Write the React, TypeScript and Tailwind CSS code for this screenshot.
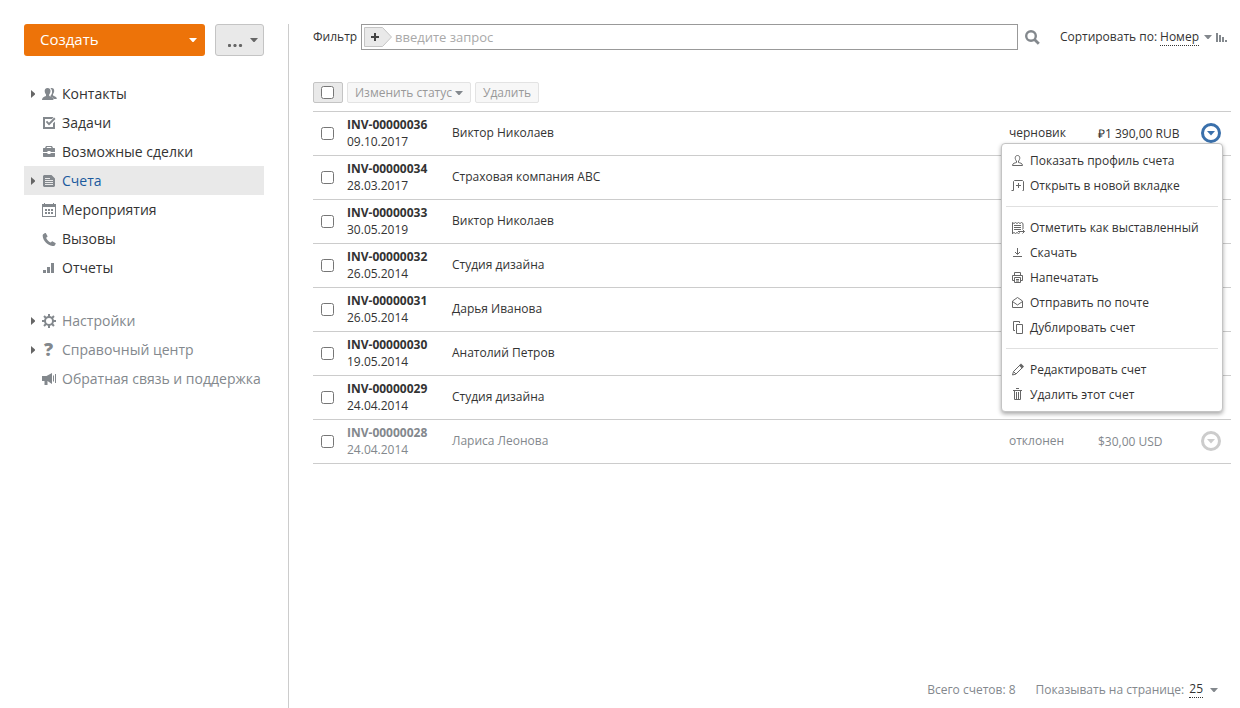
import type { ReactNode } from "react"
import { clsx } from "clsx"

function Caret({ className }: { className?: string }) {
  return (
    <svg className={clsx("h-1 w-2 shrink-0", className)} viewBox="0 0 8 4" fill="currentColor" aria-hidden="true">
      <path d="M0 0h8L4.500 4h-1z" />
    </svg>
  )
}

function NavIcon({ children }: { children: ReactNode }) {
  return (
    <svg className="h-[15px] w-4 shrink-0 text-[#83888d]" viewBox="0 0 16 15" fill="currentColor" aria-hidden="true">
      {children}
    </svg>
  )
}

function MenuIcon({ children }: { children: ReactNode }) {
  return (
    <svg
      className="h-[14px] w-[14px] shrink-0 text-[#666]"
      viewBox="0 0 14 14"
      fill="none"
      stroke="currentColor"
      aria-hidden="true"
    >
      {children}
    </svg>
  )
}

const gearTeeth = [0, 45, 90, 135, 180, 225, 270, 315]

const mainNav = [
  {
    title: "Контакты",
    expandable: true,
    icon: (
      <NavIcon>
        <path d="M8.300 2.200C8.800 2 9.300 2 9.700 2c1.700 0 2.600 1.200 2.500 3-.1 1.400-.6 2.500-1.200 3.200v1.200c1.500.9 3.800 1.100 3.800 3.600h-3.300c-.3-1.400-1.700-1.900-3-2.500V9.800c1.200-1.300 1.700-3 1.500-4.900-.1-1.100-.6-2-1.700-2.700z" />
        <path d="M5.600 2C3.500 2 2.500 3.400 2.700 5.200c.1 1.400.6 2.500 1.300 3.200v1.500C2.300 10.700 0 11.300 0 14h11.500c0-2.700-2.300-3.300-4.300-4.100V8.400C7.900 7.700 8.400 6.600 8.500 5.200 8.700 3.400 7.700 2 5.600 2z" />
      </NavIcon>
    ),
  },
  {
    title: "Задачи",
    icon: (
      <NavIcon>
        <path d="M1 2h10.500L10 4H3v8h8V8.500l2-2V14H1z" />
        <path d="M3.800 7l1.300-1.200L7 7.700l5.200-5.200L13.500 4 7 10.400z" />
      </NavIcon>
    ),
  },
  {
    title: "Возможные сделки",
    icon: (
      <NavIcon>
        <path d="M4 2h6l1 2h1.500l.5.500V8H8.500V7h-3v1H1V4.500L1.500 4H3zm1 1-.5 1h5L9 3z" />
        <path d="M1 9h4.500v1h3V9H13v3.500l-.5.500h-11l-.5-.500z" />
      </NavIcon>
    ),
  },
  {
    title: "Счета",
    expandable: true,
    active: true,
    icon: (
      <NavIcon>
        <path fillRule="evenodd" d="M2 2h7.500L13 5.500V13l-1 1H2l-1-1V3zM3 5v1h5V5zm0 2v1h8V7zm0 2v1h8V9zm0 2v1h8v-1z" />
      </NavIcon>
    ),
  },
  {
    title: "Мероприятия",
    icon: (
      <NavIcon>
        <path fillRule="evenodd" d="M0 2h2V1h1v1h8V1h1v1h2v13H0zM1 5v9h12V5z" />
        <path d="M3 7h2v2H3zM6 7h2v2H6zM9 7h2v2H9zM3 10h2v2H3zM6 10h2v2H6zM9 10h2v2H9z" />
      </NavIcon>
    ),
  },
  {
    title: "Вызовы",
    icon: (
      <NavIcon>
        <path d="M1.200 3.200 3 2.100c.4-.2.7-.1.900.2l1.500 2.800c.2.300.1.700-.2.900l-1.100.8c.8 2.100 2.400 3.900 4.700 4.700l1-.9c.3-.3.600-.3.900-.1l2.700 1.600c.3.200.4.500.2.900l-.9 1.400c-.4.500-1.300.7-2.300.6C5.500 14.400 1 9.700.7 5c-.1-.8.1-1.400.5-1.800z" />
      </NavIcon>
    ),
  },
  {
    title: "Отчеты",
    icon: (
      <NavIcon>
        <path d="M1 10h3v3H1zM5 7h3v6H5zM9 3h3v10H9z" />
      </NavIcon>
    ),
  },
]

const extraNav = [
  {
    title: "Настройки",
    expandable: true,
    icon: (
      <NavIcon>
        <circle cx="7" cy="8" r="4" fill="none" stroke="currentColor" strokeWidth="2" />
        {gearTeeth.map((angle) => (
          <path key={angle} d="M6 1h2v3H6z" transform={`rotate(${angle} 7 8)`} />
        ))}
      </NavIcon>
    ),
  },
  {
    title: "Справочный центр",
    expandable: true,
    icon: <span className="w-4 pl-[2px] text-[18px] leading-[15px] font-extrabold text-[#83888d]">?</span>,
  },
  {
    title: "Обратная связь и поддержка",
    icon: (
      <NavIcon>
        <path d="M0 5h4.500L10 2v11L5.500 10v4h-3v-4H0z" />
        <path d="M11.500 4.500v6M13.500 3v9" fill="none" stroke="currentColor" />
      </NavIcon>
    ),
  },
]

const menuGroups = [
  [
    {
      title: "Показать профиль счета",
      icon: (
        <MenuIcon>
          <path d="M5.500 8.500V7C3.800 5.500 3.500 1.500 6.500 1.500S9.200 5.500 7.500 7v1.500c1.500.5 4 .5 4 3h-10c0-2.500 2.500-2.500 4-3z" />
        </MenuIcon>
      ),
    },
    {
      title: "Открыть в новой вкладке",
      icon: (
        <MenuIcon>
          <path d="M.5 11.500h2v-9l1-1h8l1 1v9h-1M7.500 4v5M5 6.500h5" />
        </MenuIcon>
      ),
    },
  ],
  [
    {
      title: "Отметить как выставленный",
      icon: (
        <MenuIcon>
          <path d="M1.500 13V1.500l1.500 1 1.500-1 1.500 1 1.500-1 1.500 1 1.500-1 1.500 1V8M1.500 12.500l1.500-1 1.500 1 1.500-1 1.500 1 1.500-1M3 4.500h7M3 6.500h7M3 8.500h7M7 10.500h6.500M11.500 8.500l2 2-2 2" />
        </MenuIcon>
      ),
    },
    {
      title: "Скачать",
      icon: (
        <MenuIcon>
          <path d="M6.500 2v6M4 6l2.500 2.500L9 6M2 10.500h9" />
        </MenuIcon>
      ),
    },
    {
      title: "Напечатать",
      icon: (
        <MenuIcon>
          <path d="M3.500 4V1.500h6V4M3.500 9.500h-2v-5h10v5h-2M3.500 6.500h6v5h-6zM5 8.500h3M5 10h3" />
        </MenuIcon>
      ),
    },
    {
      title: "Отправить по почте",
      icon: (
        <MenuIcon>
          <path d="m1.500 5 5-3.500 5 3.500v6.500h-10zM1.500 5.500l5 3.500 5-3.500" />
        </MenuIcon>
      ),
    },
    {
      title: "Дублировать счет",
      icon: (
        <MenuIcon>
          <path d="M4 9.500H2.500v-9h6V2M5.500 3.500h6v9h-6z" />
        </MenuIcon>
      ),
    },
  ],
  [
    {
      title: "Редактировать счет",
      icon: (
        <MenuIcon>
          <path d="m1.500 12 1-3.500L9 2l2.500 2.500L5 11zM2.500 8.500 5 11" />
          <path d="m8 2.500 2-2L13 3.500l-2 2z" fill="currentColor" stroke="none" />
        </MenuIcon>
      ),
    },
    {
      title: "Удалить этот счет",
      icon: (
        <MenuIcon>
          <path d="M2 2.500h9M5 .5h3M3.500 3v8.500h6V3M5.500 4v7M7.500 4v7" />
        </MenuIcon>
      ),
    },
  ],
]

const invoices = [
  { id: "INV-00000036", date: "09.10.2017", client: "Виктор Николаев", status: "черновик", amount: "₽1 390,00 RUB", open: true },
  { id: "INV-00000034", date: "28.03.2017", client: "Страховая компания ABC" },
  { id: "INV-00000033", date: "30.05.2019", client: "Виктор Николаев" },
  { id: "INV-00000032", date: "26.05.2014", client: "Студия дизайна" },
  { id: "INV-00000031", date: "26.05.2014", client: "Дарья Иванова" },
  { id: "INV-00000030", date: "19.05.2014", client: "Анатолий Петров" },
  { id: "INV-00000029", date: "24.04.2014", client: "Студия дизайна" },
  { id: "INV-00000028", date: "24.04.2014", client: "Лариса Леонова", status: "отклонен", amount: "$30,00 USD", muted: true },
]

function NavList({ items, muted }: { items: typeof mainNav; muted?: boolean }) {
  return (
    <ul>
      {items.map((item) => (
        <li key={item.title}>
          <a
            href="#"
            className={clsx(
              "flex h-[29px] items-center pl-[7px] text-sm whitespace-nowrap",
              item.active ? "bg-[#e9e9e9] text-[#1a5a9e]" : muted ? "text-[#83888d]" : "text-[#333]",
            )}
          >
            <span className="mr-[7px] w-1">
              {item.expandable && (
                <svg className="h-2 w-1 text-[#666]" viewBox="0 0 4 8" fill="currentColor" aria-hidden="true">
                  <path d="M0 0v8l4-3.500v-1z" />
                </svg>
              )}
            </span>
            {item.icon}
            <span className="ml-1">{item.title}</span>
          </a>
        </li>
      ))}
    </ul>
  )
}

function Sidebar() {
  return (
    <aside className="w-60 shrink-0">
      <div className="flex gap-[10px]">
        <button className="flex h-8 flex-1 items-center justify-between rounded-[3px] bg-[#ed7309] pr-2 pb-px pl-4 text-[15px] font-medium text-white">
          Создать
          <Caret />
        </button>
        <button
          aria-label="Другие действия"
          className="flex h-8 w-[49px] items-center justify-between rounded-[3px] border border-[#c4c4c4] bg-[#e9e9e9] pr-[5px] pl-3 text-[#666]"
        >
          <svg className="mt-[11px] h-[3px] w-[15px]" viewBox="0 0 15 3" fill="currentColor" aria-hidden="true">
            <circle cx="1.500" cy="1.500" r="1.600" />
            <circle cx="7" cy="1.500" r="1.600" />
            <circle cx="12.500" cy="1.500" r="1.600" />
          </svg>
          <Caret />
        </button>
      </div>
      <nav className="mt-[23px] flex flex-col gap-6">
        <NavList items={mainNav} />
        <NavList items={extraNav} muted />
      </nav>
    </aside>
  )
}

function FilterBar() {
  return (
    <div className="flex h-[26px] items-center">
      <label htmlFor="filter" className="mr-1 w-11 text-xs">
        Фильтр
      </label>
      <div className="flex h-[26px] flex-1 items-center border border-[#999] bg-white pl-[2px]">
        <button aria-label="Добавить фильтр" className="mr-[3px]">
          <svg className="h-5 w-7" viewBox="0 0 28 20" aria-hidden="true">
            <path d="M.5.500h18L27.500 10l-9 9.500H.5z" fill="#e9e9e9" stroke="#c4c4c4" />
            <path d="M10 6h2v3h3v2h-3v3h-2v-3H7V9h3z" fill="#444" />
          </svg>
        </button>
        <input
          id="filter"
          type="text"
          placeholder="введите запрос"
          className="h-full flex-1 text-[13px] outline-none placeholder:text-[#a9a9a9]"
        />
      </div>
      <button aria-label="Найти" className="ml-[7px]">
        <svg className="h-[15px] w-[15px] text-[#83888d]" viewBox="0 0 15 15" fill="none" stroke="currentColor" aria-hidden="true">
          <circle cx="6" cy="6" r="4.800" strokeWidth="2.400" />
          <path d="m9.500 9.500 4.300 4.300" strokeWidth="2.800" />
        </svg>
      </button>
      <label htmlFor="sort" className="mr-[3px] ml-5 text-xs">
        Сортировать по:
      </label>
      <select id="sort" className="h-[17px] appearance-none border-b border-dotted border-[#333] text-xs leading-4 [field-sizing:content]">
        <option>Номер</option>
      </select>
      <Caret className="ml-[5px] text-[#83888d]" />
      <button aria-label="Порядок сортировки" className="mr-1 ml-1">
        <svg className="h-[9px] w-[11px] text-[#83888d]" viewBox="0 0 11 9" fill="currentColor" aria-hidden="true">
          <path d="M0 0h2v9H0zM3 2h2v7H3zM6 4h2v5H6zM9 7h2v2H9z" />
        </svg>
      </button>
    </div>
  )
}

function Toolbar() {
  const button =
    "flex h-[21px] items-center gap-[3px] rounded-[2px] border border-[#e3e3e3] bg-[#f7f7f7] px-[7px] text-xs text-[#999]"

  return (
    <div className="mt-8 flex gap-1">
      <label className="flex h-[21px] w-[30px] items-center rounded-[2px] border border-[#c4c4c4] bg-[#e9e9e9] pl-[7px]">
        <input type="checkbox" aria-label="Выбрать все" className="h-[13px] w-[13px]" />
      </label>
      <button className={button}>
        Изменить статус
        <Caret className="text-[#83888d]" />
      </button>
      <button className={button}>Удалить</button>
    </div>
  )
}

function ActionMenu() {
  return (
    <div
      role="menu"
      className="absolute top-[31px] right-2 z-10 w-[222px] rounded-[4px] border border-[#c4c4c4] bg-white px-1 py-1 shadow-[0_2px_4px_rgba(0,0,0,0.35)]"
    >
      {menuGroups.map((group, index) => (
        <div key={index} className={clsx(index > 0 && "mt-2 border-t border-[#e0e0e0] pt-2")}>
          {group.map((item) => (
            <button
              key={item.title}
              role="menuitem"
              className="flex h-[25px] w-full items-center gap-[5px] pl-[5px] text-xs whitespace-nowrap text-[#333]"
            >
              {item.icon}
              {item.title}
            </button>
          ))}
        </div>
      ))}
    </div>
  )
}

function InvoiceTable() {
  return (
    <table className="mt-2 w-full table-fixed border-collapse text-left text-xs">
      <colgroup>
        <col className="w-[34px]" />
        <col className="w-[105px]" />
        <col />
        <col className="w-[89px]" />
        <col className="w-[103px]" />
        <col className="w-[30px]" />
      </colgroup>
      <tbody>
        {invoices.map((invoice) => (
          <tr key={invoice.id} className={clsx("h-11 border-y border-[#ccc]", invoice.muted && "text-[#83888d]")}>
            <td className="pl-2">
              <input type="checkbox" aria-label={invoice.id} className="block h-[13px] w-[13px]" />
            </td>
            <td className="pb-[2px] leading-[17px]">
              <a href="#" className="block font-bold">
                {invoice.id}
              </a>
              {invoice.date}
            </td>
            <td className="pb-[2px]">{invoice.client}</td>
            <td className="pb-[2px]">{invoice.status}</td>
            <td>{invoice.amount}</td>
            <td className="relative pb-[2px]">
              <button
                aria-label="Действия"
                className={clsx("block", invoice.open ? "text-[#3a70ab]" : "text-[#ccc]")}
              >
                <svg className="h-5 w-5" viewBox="0 0 20 20" aria-hidden="true">
                  <circle cx="10" cy="10" r="8.500" fill="none" stroke="currentColor" strokeWidth="3" />
                  <path d="M6 8h8l-4 4.500z" fill="currentColor" />
                </svg>
              </button>
              {invoice.open && <ActionMenu />}
            </td>
          </tr>
        ))}
      </tbody>
    </table>
  )
}

export default function App() {
  return (
    <div className="flex min-h-screen bg-white pt-6 pr-[9px] pl-6 font-['Open_Sans',sans-serif] text-[#333]">
      <Sidebar />
      <main className="ml-6 flex flex-1 flex-col border-l border-[#ccc] pl-6">
        <FilterBar />
        <Toolbar />
        <InvoiceTable />
        <footer className="mt-auto flex items-center justify-end pr-[13px] pb-[10px] text-xs text-[#83888d]">
          <span className="mr-5">Всего счетов: 8</span>
          <label htmlFor="page-size" className="mr-[5px]">
            Показывать на странице:
          </label>
          <select id="page-size" className="h-[17px] appearance-none border-b border-dotted border-[#333] leading-4 text-[#333] [field-sizing:content]">
            <option>25</option>
          </select>
          <Caret className="ml-[7px]" />
        </footer>
      </main>
    </div>
  )
}
